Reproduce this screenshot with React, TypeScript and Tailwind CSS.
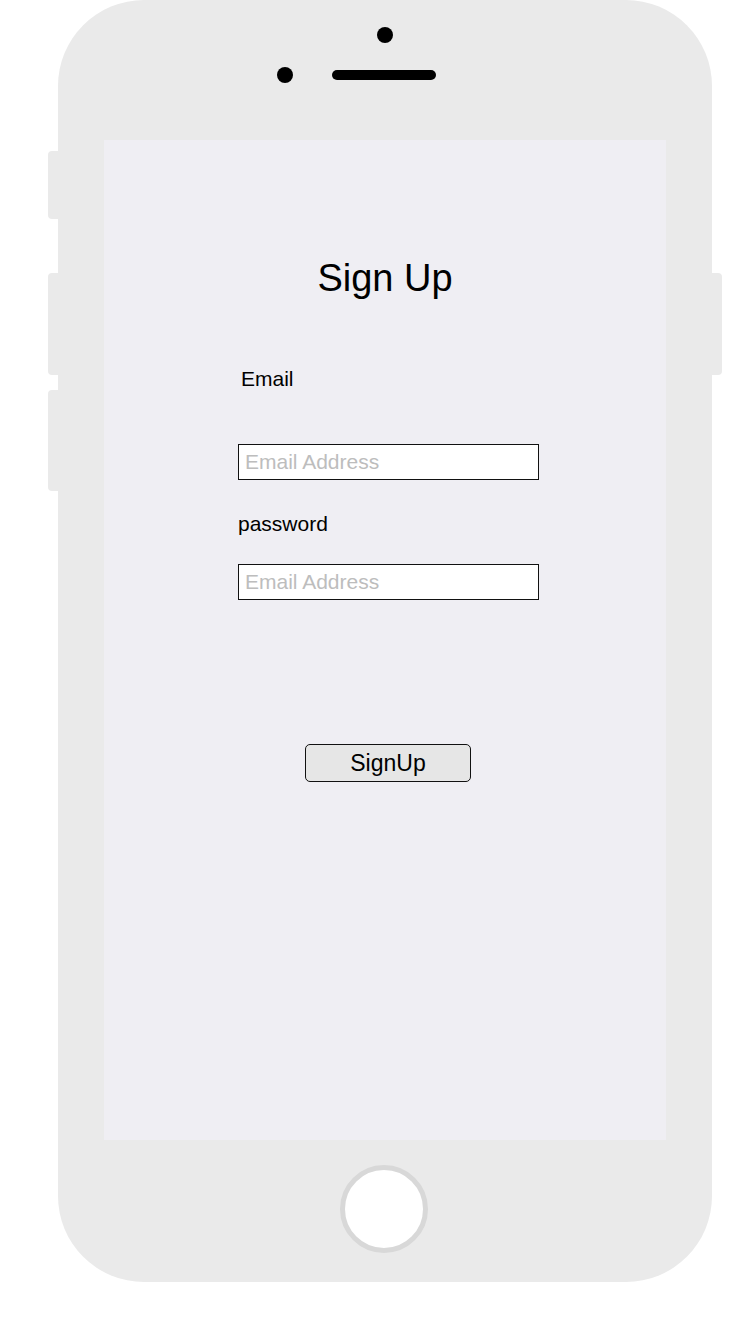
import React from "react";

const font = { fontFamily: '"Liberation Sans", Arial, sans-serif' };

const SideButton: React.FC<{ h: string; side: "l" | "r"; mt: string }> = ({ h, side, mt }) => (
  <div
    className={`w-[10px] bg-[#eaeaea] ${h} ${mt} ${side === "l" ? "rounded-l-[4px]" : "rounded-r-[4px]"}`}
  />
);

export default function App() {
  return (
    <div className="w-[748px] h-[1326px] bg-white flex flex-row pl-[48px]" style={font}>
      {/* left hardware buttons */}
      <div className="flex flex-col w-[10px]">
        <SideButton h="h-[68px]" side="l" mt="mt-[151px]" />
        <SideButton h="h-[102px]" side="l" mt="mt-[54px]" />
        <SideButton h="h-[101px]" side="l" mt="mt-[15px]" />
      </div>

      {/* phone body */}
      <div className="w-[654px] h-[1282px] bg-[#eaeaea] rounded-[86px] flex flex-col">
        <div className="ml-[319px] mt-[27px] w-4 h-4 rounded-full bg-black" />
        <div className="ml-[219px] mt-[24px] flex flex-row items-center gap-[39px]">
          <div className="w-4 h-4 rounded-full bg-black" />
          <div className="w-[104px] h-[10px] rounded-full bg-black" />
        </div>

        {/* screen */}
        <div className="ml-[46px] mt-[57px] w-[562px] h-[1000px] bg-[#efeef3] flex flex-col">
          <h1 className="mt-[118px] text-center text-[38px] leading-[40px] text-black">Sign Up</h1>

          <div className="ml-[134px] flex flex-col items-start">
            <label className="mt-[69px] ml-[3px] text-[21px] leading-[24px] text-black">Email</label>
            <input
              className="mt-[53px] w-[301px] h-[36px] border border-[#111] bg-white px-[6px] text-[21px] outline-none placeholder:text-[#bdbdbd]"
              placeholder="Email Address"
            />
            <label className="mt-[32px] text-[21px] leading-[24px] text-black">password</label>
            <input
              className="mt-[28px] w-[301px] h-[36px] border border-[#111] bg-white px-[6px] text-[21px] outline-none placeholder:text-[#bdbdbd]"
              placeholder="Email Address"
            />
            <button className="mt-[144px] ml-[67px] w-[166px] h-[38px] rounded-[5px] border border-[#111] bg-[#e6e6e6] text-[23px] leading-none text-black">
              SignUp
            </button>
          </div>
        </div>

        {/* home button */}
        <div className="ml-[282px] mt-[25px] w-[88px] h-[88px] rounded-full border-[5px] border-[#d8d8d8] bg-white" />
      </div>

      {/* right hardware button */}
      <div className="flex flex-col w-[10px]">
        <SideButton h="h-[102px]" side="r" mt="mt-[273px]" />
      </div>
    </div>
  );
}
